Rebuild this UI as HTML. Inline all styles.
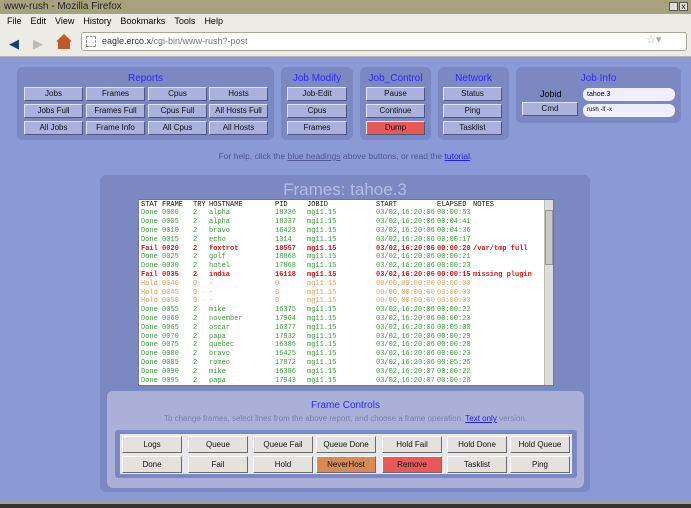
<!DOCTYPE html>
<html><head><meta charset="utf-8"><style>
*{box-sizing:border-box;margin:0;padding:0}
body{width:691px;height:508px;position:relative;overflow:hidden;font-family:"Liberation Sans",sans-serif;background:#8a9ad6}
.a{position:absolute}
.tb{left:0;top:0;width:691px;height:14px;background:#a8a27c;color:#222;font-size:10px;line-height:14px;padding-left:4px}
.mb{left:0;top:14px;width:691px;height:14px;background:#edebe6;font-size:9px;line-height:14px}
.mb span{margin-left:7px;margin-right:2px}
.tl{left:0;top:28px;width:691px;height:29px;background:#edebe6;border-bottom:1px solid #b8b4a8}
.url{left:81px;top:32px;width:606px;height:19px;background:#fff;border:1px solid #a9a59a;border-radius:3px;font-size:9px;line-height:17px;padding-left:20px;color:#777}
.pn{background:#7b88c2;border-radius:6px}
.h{color:#2a2aff;font-size:10px;text-align:center}
.b{position:absolute;height:14px;background:#a9b1dc;border:1px solid;border-color:#dfe3f6 #4d5580 #4d5580 #dfe3f6;font-size:8px;line-height:12px;text-align:center;color:#111}
.fb{position:absolute;height:17px;width:60px;background:#e4e2dd;border:1px solid;border-color:#fff #6a6a6a #6a6a6a #fff;font-size:8px;line-height:15px;text-align:center;color:#111}
.ls{left:138px;top:199px;width:416px;height:187px;background:#fff;border:1px solid #777;font-family:"Liberation Mono",monospace;font-size:7px;overflow:hidden}
.r{position:absolute;left:0;height:9px;line-height:9px;width:405px}
.r span{position:absolute;white-space:pre}
.hd{color:#111}.g{color:#33a633}.x{color:#ee1111;font-weight:bold}.o{color:#f0a050}
</style></head><body>
<div class="a tb">www-rush - Mozilla Firefox</div>
<div class="a" style="left:669px;top:2px;width:9px;height:9px;background:#ddd;border:1px solid #555"></div>
<div class="a" style="left:679px;top:2px;width:9px;height:9px;background:#ddd;border:1px solid #555;font-size:8px;line-height:8px;text-align:center">x</div>
<div class="a mb"><span>File</span><span>Edit</span><span>View</span><span>History</span><span>Bookmarks</span><span>Tools</span><span>Help</span></div>
<div class="a tl"></div>
<div class="a" style="left:9px;top:36px;font-size:13px;color:#1d3d7a">&#9664;</div>
<div class="a" style="left:33px;top:36px;font-size:13px;color:#bbb">&#9654;</div>
<div class="a" style="left:56px;top:34px;width:16px;height:15px;background:#c05a2a;clip-path:polygon(50% 0,100% 50%,88% 50%,88% 100%,12% 100%,12% 50%,0 50%)"></div>
<div class="a url"><span style="color:#333">eagle.erco.x</span>/cgi-bin/www-rush?-post</div>
<div class="a" style="left:86px;top:36px;width:10px;height:11px;border:1px dashed #999"></div>
<div class="a" style="left:646px;top:33px;font-size:11px;color:#aaa">☆▾</div>

<div class="a pn" style="left:17px;top:67px;width:257px;height:73px"></div>
<div class="a h" style="left:17px;top:73px;width:257px">Reports</div>
<div class="b" style="left:24px;top:87px;width:59px">Jobs</div>
<div class="b" style="left:86px;top:87px;width:59px">Frames</div>
<div class="b" style="left:148px;top:87px;width:59px">Cpus</div>
<div class="b" style="left:209px;top:87px;width:59px">Hosts</div>
<div class="b" style="left:24px;top:104px;width:59px">Jobs Full</div>
<div class="b" style="left:86px;top:104px;width:59px">Frames Full</div>
<div class="b" style="left:148px;top:104px;width:59px">Cpus Full</div>
<div class="b" style="left:209px;top:104px;width:59px">All Hosts Full</div>
<div class="b" style="left:24px;top:121px;width:59px">All Jobs</div>
<div class="b" style="left:86px;top:121px;width:59px">Frame Info</div>
<div class="b" style="left:148px;top:121px;width:59px">All Cpus</div>
<div class="b" style="left:209px;top:121px;width:59px">All Hosts</div>
<div class="a pn" style="left:281px;top:67px;width:72px;height:73px"></div>
<div class="a h" style="left:281px;top:73px;width:72px">Job Modify</div>
<div class="b" style="left:287px;top:87px;width:60px">Job-Edit</div>
<div class="b" style="left:287px;top:104px;width:60px">Cpus</div>
<div class="b" style="left:287px;top:121px;width:60px">Frames</div>
<div class="a pn" style="left:360px;top:67px;width:71px;height:73px"></div>
<div class="a h" style="left:360px;top:73px;width:71px">Job_Control</div>
<div class="b" style="left:366px;top:87px;width:59px">Pause</div>
<div class="b" style="left:366px;top:104px;width:59px">Continue</div>
<div class="b" style="left:366px;top:121px;width:59px;background:#e85a55">Dump</div>
<div class="a pn" style="left:438px;top:67px;width:71px;height:73px"></div>
<div class="a h" style="left:438px;top:73px;width:71px">Network</div>
<div class="b" style="left:443px;top:87px;width:59px">Status</div>
<div class="b" style="left:443px;top:104px;width:59px">Ping</div>
<div class="b" style="left:443px;top:121px;width:59px">Tasklist</div>
<div class="a pn" style="left:516px;top:67px;width:165px;height:56px"></div>
<div class="a h" style="left:516px;top:73px;width:165px">Job Info</div>
<div class="a" style="left:540px;top:89px;font-size:9px">Jobid</div>
<div class="a" style="left:583px;top:88px;width:92px;height:13px;background:#eeeeff;border-radius:6px;font-size:7px;line-height:13px;padding-left:4px">tahoe.3</div>
<div class="b" style="left:522px;top:102px;width:56px">Cmd</div>
<div class="a" style="left:583px;top:104px;width:92px;height:13px;background:#eeeeff;border-radius:6px;font-size:6px;line-height:13px;padding-left:4px">rush -lf -x</div>

<div class="a" style="left:0;top:151px;width:691px;text-align:center;font-size:8.5px;color:#4e5894">For help, click the <u>blue headings</u> above buttons, or read the <u style="color:#2222ee">tutorial</u>.</div>

<div class="a pn" style="left:100px;top:175px;width:490px;height:317px"></div>
<div class="a" style="left:100px;top:180px;width:490px;text-align:center;font-size:17px;color:#b4bce6">Frames: tahoe.3</div>
<div class="a ls" id="ls"></div>
<div class="a" style="left:544px;top:200px;width:9px;height:185px;background:#ddd;border-left:1px solid #bbb"></div>
<div class="a" style="left:545px;top:210px;width:8px;height:55px;background:#c8c8c8;border:1px solid #999"></div>

<div class="a" style="left:107px;top:391px;width:477px;height:97px;background:#aab0d8;border-radius:6px"></div>
<div class="a h" style="left:107px;top:400px;width:477px">Frame Controls</div>
<div class="a" style="left:107px;top:414px;width:477px;text-align:center;font-size:8px;color:#7a80a8">To change frames, select lines from the above report, and choose a frame operation. <u style="color:#2222ee">Text only</u> version.</div>
<div class="a" style="left:115px;top:430px;width:462px;height:48px;background:#7b88c2;border-radius:3px"></div>
<div class="a" style="left:120px;top:434px;width:452px;height:40px;background:#e8e8ec"></div>
<div id="fb"></div>
<div class="a" style="left:0;top:504px;width:691px;height:4px;background:#333"></div>
<div class="a" style="left:0;top:502px;width:691px;height:2px;background:#a8a27c"></div>
<script>
var rows=[["STAT","FRAME","TRY","HOSTNAME","PID","JOBID","START","ELAPSED","NOTES","hd"],
["Done","0000","2","alpha","18336","mg11.15","03/02,16:20:06","00:00:53","","g"],
["Done","0005","2","alpha","18337","mg11.15","03/02,16:20:06","00:04:41","","g"],
["Done","0010","2","bravo","16423","mg11.15","03/02,16:20:06","00:04:36","","g"],
["Done","0015","2","echo","1314","mg11.15","03/02,16:20:06","00:00:17","","g"],
["Fail","0020","2","foxtrot","18557","mg11.15","03/02,16:20:06","00:00:20","/var/tmp full","x"],
["Done","0025","2","golf","18868","mg11.15","03/02,16:20:06","00:00:21","","g"],
["Done","0030","2","hotel","17868","mg11.15","03/02,16:20:06","00:00:23","","g"],
["Fail","0035","2","india","16118","mg11.15","03/02,16:20:06","00:00:15","missing plugin","x"],
["Hold","0040","0","-","0","mg11.15","00/00,00:00:00","00:00:00","","o"],
["Hold","0045","0","-","0","mg11.15","00/00,00:00:00","00:00:00","","o"],
["Hold","0050","0","-","0","mg11.15","00/00,00:00:00","00:00:00","","o"],
["Done","0055","2","mike","16375","mg11.15","03/02,16:20:06","00:00:22","","g"],
["Done","0060","2","november","17964","mg11.15","03/02,16:20:06","00:00:23","","g"],
["Done","0065","2","oscar","16377","mg11.15","03/02,16:20:06","00:05:08","","g"],
["Done","0070","2","papa","17932","mg11.15","03/02,16:20:06","00:00:29","","g"],
["Done","0075","2","quebec","16386","mg11.15","03/02,16:20:06","00:00:20","","g"],
["Done","0080","2","bravo","16425","mg11.15","03/02,16:20:06","00:00:23","","g"],
["Done","0085","2","romeo","17872","mg11.15","03/02,16:20:06","00:05:25","","g"],
["Done","0090","2","mike","16386","mg11.15","03/02,16:20:07","00:00:22","","g"],
["Done","0095","2","papa","17943","mg11.15","03/02,16:20:07","00:00:28","","g"]];
var xs=[2,23,54,70,136,168,237,298,334],h="";
rows.forEach(function(r,i){h+='<div class="r '+r[9]+'" style="top:'+(0.5+i*8.8)+'px">';
for(var j=0;j<9;j++)h+='<span style="left:'+xs[j]+'px">'+r[j]+'</span>';h+='</div>';});
document.getElementById('ls').innerHTML=h;
var fb=[["Logs","Queue","Queue Fail","Queue Done","Hold Fail","Hold Done","Hold Queue"],["Done","Fail","Hold","NeverHost","Remove","Tasklist","Ping"]];
var fx=[122,188,253,316,382,447,510],o="";
fb.forEach(function(r,i){r.forEach(function(t,j){var bg=t=="NeverHost"?"background:#d88a55;":t=="Remove"?"background:#e85a5a;":"";
o+='<div class="fb" style="left:'+fx[j]+'px;top:'+(436+i*20)+'px;'+bg+'">'+t+'</div>';});});
document.getElementById('fb').innerHTML=o;
</script>
</body></html>
